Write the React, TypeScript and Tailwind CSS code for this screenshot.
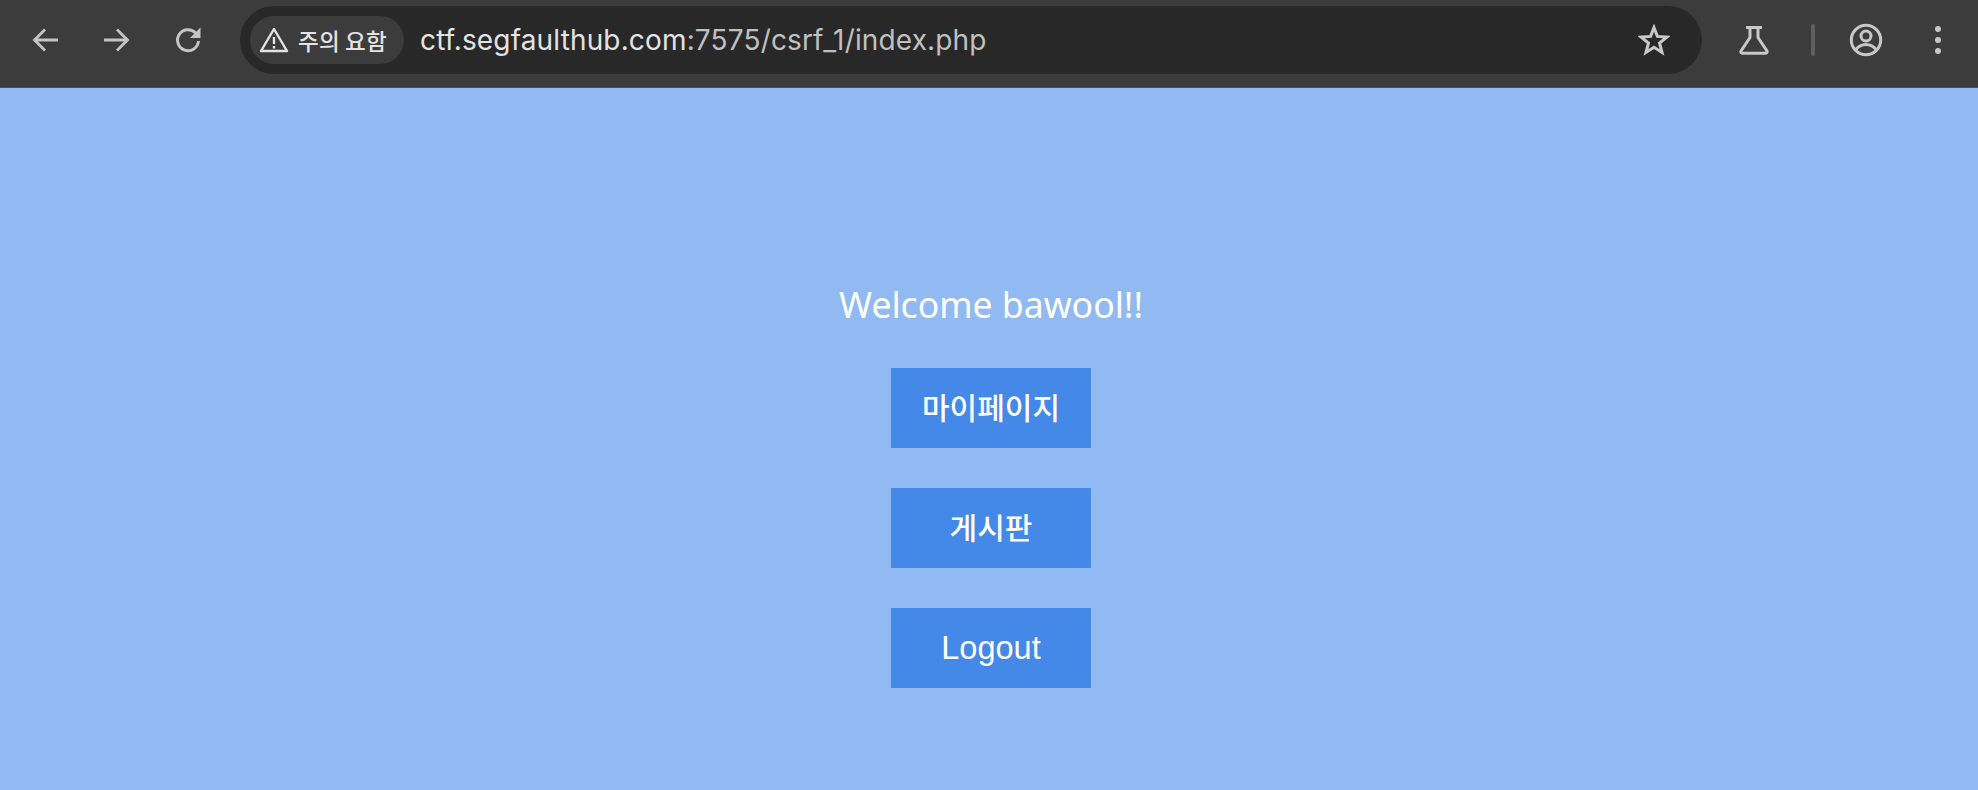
import React from "react";

function Toolbar() {
  return (
    <div className="flex h-[88px] w-full items-center bg-[#3c3c3c] border-b border-[#4a4f55] pb-[7px] pl-[2px]">
      <div className="flex w-[238px] items-center shrink-0">
        <svg className="ml-[28px]" width="30" height="30" viewBox="0 0 30 30" fill="none" stroke="#c4c4c4" strokeWidth="2.8">
          <path d="M28 15H5M15 4.500 4.500 15 15 25.500" />
        </svg>
        <svg className="ml-[42px]" width="30" height="30" viewBox="0 0 30 30" fill="none" stroke="#c4c4c4" strokeWidth="2.8">
          <path d="M2 15h23M15 4.500 25.500 15 15 25.500" />
        </svg>
        <svg className="ml-[42px]" width="30" height="30" viewBox="0 0 30 30" fill="none" stroke="#c4c4c4" strokeWidth="3">
          <path d="M24.500 16a10.500 10.500 0 1 1-3-8.200l3.500 3.600" />
          <path d="M26.500 2.500v10.500H16Z" strokeWidth="0" fill="#c4c4c4" />
        </svg>
      </div>
      <div className="flex h-[68px] w-[1462px] items-center rounded-full bg-[#282828] pl-[10px] pr-[32px] shrink-0">
        <div className="flex h-[48px] w-[154px] items-center rounded-full bg-[#3c3c3c] pl-[9px]">
          <svg width="30" height="28" viewBox="0 0 30 28" fill="none" stroke="#e3e3e3" strokeWidth="2.400" strokeLinejoin="round">
            <path d="M15 3 28 25H2Z" />
            <path d="M15 11v7M15 20v2.400" />
          </svg>
          <span className="ml-[9px] font-['Noto_Sans_CJK_KR',sans-serif] text-[22.500px] font-medium leading-none tracking-[0.2px] text-[#e3e3e3]">주의 요함</span>
        </div>
        <div className="ml-[16px] font-['Inter',sans-serif] text-[28px] tracking-[0.15px] text-[#e3e3e3]">
          ctf.segfaulthub.com<span className="text-[#c0c0c0]">:7575/csrf_1/index.php</span>
        </div>
        <svg className="ml-auto" width="32" height="32" viewBox="0 0 32 32" fill="none" stroke="#c8c8c8" strokeWidth="3" strokeLinejoin="miter">
          <path d="M16 3.500 19.400 12.400 29 13 21.500 19 24 28.400 16 23.200 8 28.400 10.500 19 3 13 12.600 12.400Z" />
        </svg>
      </div>
      <svg className="ml-[36px]" width="32" height="32" viewBox="0 0 32 32" fill="none" stroke="#c8c8c8" strokeWidth="3" strokeLinejoin="round">
        <path d="M8 3.500h16M12 3.500v10L3 27a1.500 1.500 0 0 0 1.300 2.200h23.400A1.500 1.500 0 0 0 29 27l-9-13.500v-10" />
      </svg>
      <div className="ml-[41px] h-[32px] w-[4px] rounded-sm bg-[#5f5f5f]" />
      <svg className="ml-[34px]" width="34" height="34" viewBox="0 0 34 34" fill="none" stroke="#c8c8c8" strokeWidth="3">
        <circle cx="17" cy="17" r="14.700" />
        <circle cx="17" cy="13" r="5" />
        <path d="M6.500 27c3-4 6.500-5.500 10.500-5.500s7.500 1.500 10.500 5.500" />
      </svg>
      <div className="ml-[52px] flex flex-col gap-[5px]">
        <div className="h-[6px] w-[6px] rounded-full bg-[#c8c8c8]" />
        <div className="h-[6px] w-[6px] rounded-full bg-[#c8c8c8]" />
        <div className="h-[6px] w-[6px] rounded-full bg-[#c8c8c8]" />
      </div>
    </div>
  );
}

function LinkButton({ label, font }: { label: string; font: string }) {
  return (
    <div className={`flex h-[80px] w-[200px] items-center justify-center bg-[#4489e8] text-white ${font}`}>
      {label}
    </div>
  );
}

export default function App() {
  return (
    <div className="flex h-[790px] w-[1978px] flex-col overflow-hidden bg-[#90baf1]">
      <Toolbar />
      <div className="flex flex-1 flex-col items-center pl-[4px] pt-[193px]">
        <div className="h-[47px] font-['Noto_Sans',sans-serif] text-[35.600px] leading-[46px] text-white">Welcome bawool!!</div>
        <div className="mt-[40px] flex flex-col gap-[40px]">
          <LinkButton label="마이페이지" font="font-['Noto_Sans_CJK_KR',sans-serif] text-[30px] font-medium pb-[3px]" />
          <LinkButton label="게시판" font="font-['Noto_Sans_CJK_KR',sans-serif] text-[30px] font-medium pb-[3px]" />
          <LinkButton label="Logout" font="font-['Liberation_Sans',sans-serif] text-[32.500px]" />
        </div>
      </div>
    </div>
  );
}
